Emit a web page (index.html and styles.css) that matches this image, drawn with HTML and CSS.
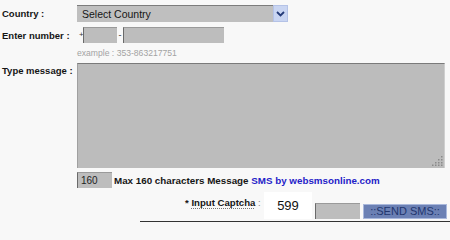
FILE: index.html
```html
<!DOCTYPE html>
<html>
<head>
<meta charset="utf-8">
<title>Send SMS</title>
<link rel="stylesheet" href="styles.css">
</head>
<body>
<form class="page">
  <div class="row row-country">
    <div class="label">Country :</div>
    <div class="select">
      <span class="select-text">Select Country</span>
      <span class="select-btn">
        <svg width="9" height="6" viewBox="0 0 9 6"><path d="M1 1 L4.5 4.5 L8 1" fill="none" stroke="#233a78" stroke-width="1.8"/></svg>
      </span>
    </div>
  </div>
  <div class="row row-number">
    <div class="label">Enter number :</div>
    <span class="plus">+</span>
    <input class="field code" type="text">
    <span class="dash">-</span>
    <input class="field num" type="text">
  </div>
  <div class="row row-example">
    <div class="label"></div>
    <span class="example">example : 353-863217751</span>
  </div>
  <div class="row row-message">
    <div class="label label-top">Type message :</div>
    <div class="msg-wrap">
      <textarea class="message"></textarea>
      <svg class="grip" width="11" height="11" viewBox="0 0 11 11">
        <g fill="#8a8a8a">
          <rect x="9" y="1" width="1.5" height="1.5"/>
          <rect x="6" y="4" width="1.5" height="1.5"/>
          <rect x="9" y="4" width="1.5" height="1.5"/>
          <rect x="3" y="7" width="1.5" height="1.5"/>
          <rect x="6" y="7" width="1.5" height="1.5"/>
          <rect x="9" y="7" width="1.5" height="1.5"/>
          <rect x="0" y="9.5" width="1.5" height="1.5"/>
          <rect x="3" y="9.5" width="1.5" height="1.5"/>
          <rect x="6" y="9.5" width="1.5" height="1.5"/>
          <rect x="9" y="9.5" width="1.5" height="1.5"/>
        </g>
      </svg>
    </div>
  </div>
  <div class="row row-count">
    <div class="label"></div>
    <input class="field counter" type="text" value="160">
    <span class="info">Max 160 characters Message <span class="brand">SMS by websmsonline.com</span></span>
  </div>
  <div class="row row-captcha">
    <div class="captcha-label"><span class="star">*</span> <span class="cap-u">Input Captcha</span> <span class="colon">:</span></div>
    <div class="captcha-img">599</div>
    <input class="field captcha-input" type="text">
    <button class="send" type="button">::SEND SMS::</button>
  </div>
  <div class="rule"></div>
</form>
</body>
</html>
```
FILE: styles.css
```css
html, body {
  margin: 0;
  padding: 0;
  background: #f8f8f8;
}
body {
  font-family: "Liberation Sans", Arial, sans-serif;
  color: #111;
  overflow: hidden;
}
.page {
  padding: 5px 0 0 2px;
  margin: 0;
}
.row {
  display: flex;
  align-items: center;
}
.label {
  width: 75px;
  flex: none;
  font-weight: bold;
  font-size: 9.5px;
  line-height: 11px;
  color: #151515;
}
.label-top {
  align-self: flex-start;
  padding-top: 2px;
}
.row-country {
  height: 17px;
}
.select {
  width: 211px;
  height: 17px;
  box-sizing: border-box;
  display: flex;
  background: #bfbfbf;
  border-top: 1px solid #7c7c7c;
}
.select-text {
  flex: 1;
  font-size: 10.5px;
  line-height: 16px;
  padding-left: 5px;
  color: #151515;
}
.select-btn {
  width: 15px;
  margin-top: -1px;
  height: 17px;
  box-sizing: border-box;
  background: #c9d5f2;
  border: 1px solid #b4c2e6;
  display: flex;
  align-items: center;
  justify-content: center;
}
.row-number {
  margin-top: 5px;
  height: 16px;
}
.field {
  box-sizing: border-box;
  margin: 0;
  padding: 0 0 0 3px;
  background: #bdbdbd;
  border: none;
  border-left: 1px solid #6a6a6a;
  border-top: 1px solid #9a9a9a;
  font-family: "Liberation Sans", Arial, sans-serif;
  font-size: 10px;
  color: #222;
  outline: none;
}
.plus {
  width: 6px;
  font-size: 8px;
  line-height: 16px;
  padding-left: 2px;
  box-sizing: border-box;
  color: #333;
}
.code {
  width: 34px;
  height: 16px;
}
.dash {
  width: 6px;
  text-align: center;
  font-size: 9px;
  color: #333;
}
.num {
  width: 101px;
  height: 16px;
}
.row-example {
  margin-top: 5px;
  height: 10px;
}
.example {
  font-size: 8.6px;
  color: #a3a3a3;
}
.row-message {
  margin-top: 5px;
}
.msg-wrap {
  position: relative;
  width: 368px;
  height: 105px;
}
.message {
  display: block;
  width: 368px;
  height: 105px;
  box-sizing: border-box;
  margin: 0;
  padding: 2px;
  resize: none;
  background: #bcbcbc;
  border: none;
  border-top: 1px solid #7a7a7a;
  border-left: 1px solid #a0a0a0;
  border-right: 1px solid #cfcfcf;
  outline: none;
}
.grip {
  position: absolute;
  right: 2px;
  bottom: 2px;
}
.row-count {
  margin-top: 4px;
  height: 16px;
}
.counter {
  width: 35px;
  height: 16px;
  color: #222;
}
.info {
  padding-left: 2px;
  font-size: 9.8px;
  font-weight: bold;
  color: #151515;
  white-space: nowrap;
}
.brand {
  color: #1f22c8;
}
.row-captcha {
  margin-top: 4px;
  height: 27px;
  align-items: flex-end;
  padding-left: 183px;
}
.captcha-label {
  align-self: flex-start;
  padding-top: 5px;
  width: 79px;
  font-size: 9.6px;
  line-height: 11px;
  font-weight: bold;
  white-space: nowrap;
  color: #151515;
}
.cap-u {
  text-decoration: underline dotted #777;
  text-underline-offset: 2px;
}
.colon {
  font-weight: normal;
  color: #888;
}
.captcha-img {
  width: 48px;
  height: 27px;
  background: #ffffff;
  font-size: 13px;
  line-height: 27px;
  text-align: center;
  color: #111;
  margin-right: 3px;
}
.captcha-input {
  width: 45px;
  height: 16px;
  margin-right: 3px;
}
.send {
  width: 84px;
  height: 15px;
  box-sizing: border-box;
  margin: 0;
  padding: 0;
  background: #6b80b4;
  border: 1px solid #a9b8dc;
  font-family: "Liberation Sans", Arial, sans-serif;
  font-size: 11px;
  line-height: 13px;
  color: #22366e;
  cursor: pointer;
}
.rule {
  margin-top: 2px;
  margin-left: 138px;
  border-top: 1px solid #333;
}
```
